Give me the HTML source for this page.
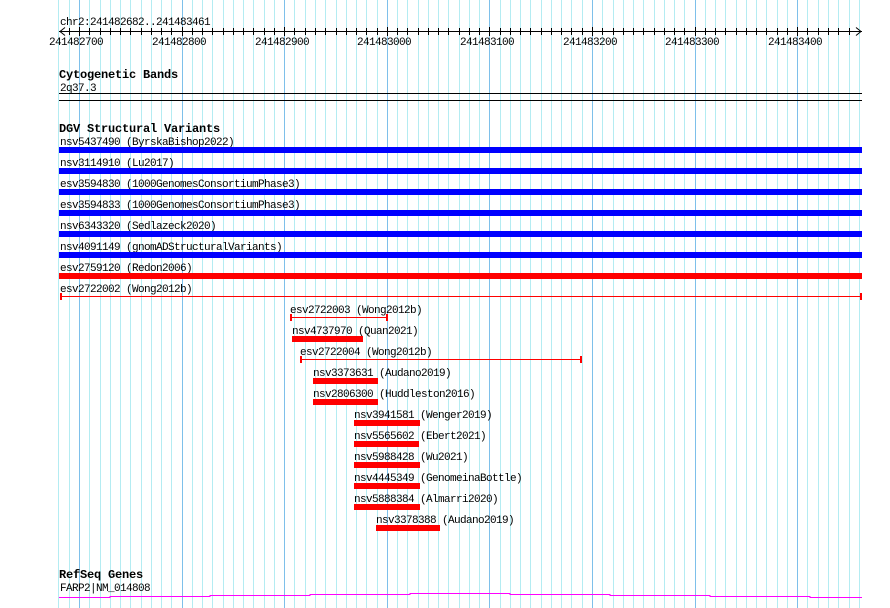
<!DOCTYPE html>
<html><head><meta charset="utf-8"><style>
html,body{margin:0;padding:0;background:#fff;}
svg{display:block}
text{font-family:"Liberation Mono","DejaVu Sans Mono",monospace;font-size:11px;letter-spacing:-0.6px;fill:#000}
.b{font-weight:bold;font-size:12px;letter-spacing:-0.2px}
</style></head><body>
<svg width="890" height="608" viewBox="0 0 890 608" xmlns="http://www.w3.org/2000/svg">
<g id="grid"></g>
<g id="ruler" stroke="#000" stroke-width="1" fill="none">
<line x1="59" y1="31.5" x2="862" y2="31.5"/>
<polyline points="65,27.5 60,31.5 65,35.5"/>
<polyline points="856,27.5 861,31.5 856,35.5"/>
</g>
<text x="60" y="25">chr2:241482682..241483461</text>
<text x="49" y="45">241482700</text>
<text x="152" y="45">241482800</text>
<text x="255" y="45">241482900</text>
<text x="357" y="45">241483000</text>
<text x="460" y="45">241483100</text>
<text x="563" y="45">241483200</text>
<text x="665" y="45">241483300</text>
<text x="768" y="45">241483400</text>

<text class="b" x="59" y="78">Cytogenetic Bands</text>
<text x="60" y="91">2q37.3</text>
<rect x="59" y="93" width="803" height="1" fill="#000"/>
<rect x="59" y="100" width="803" height="1" fill="#000"/>

<text class="b" x="59" y="132">DGV Structural Variants</text>
<text x="60" y="145">nsv5437490 (ByrskaBishop2022)</text>
<rect x="59" y="147" width="803" height="6" fill="#0000ff"/>
<text x="60" y="166">nsv3114910 (Lu2017)</text>
<rect x="59" y="168" width="803" height="6" fill="#0000ff"/>
<text x="60" y="187">esv3594830 (1000GenomesConsortiumPhase3)</text>
<rect x="59" y="189" width="803" height="6" fill="#0000ff"/>
<text x="60" y="208">esv3594833 (1000GenomesConsortiumPhase3)</text>
<rect x="59" y="210" width="803" height="6" fill="#0000ff"/>
<text x="60" y="229">nsv6343320 (Sedlazeck2020)</text>
<rect x="59" y="231" width="803" height="6" fill="#0000ff"/>
<text x="60" y="250">nsv4091149 (gnomADStructuralVariants)</text>
<rect x="59" y="252" width="803" height="6" fill="#0000ff"/>
<text x="60" y="271">esv2759120 (Redon2006)</text>
<rect x="59" y="273" width="803" height="6" fill="#ff0000"/>
<text x="60" y="292">esv2722002 (Wong2012b)</text>
<g fill="#ff0000">
<rect x="60" y="296" width="801" height="1"/><rect x="60" y="293" width="2" height="7"/><rect x="860" y="293" width="2" height="7"/>
</g>
<text x="290" y="313">esv2722003 (Wong2012b)</text>
<g fill="#ff0000">
<rect x="290" y="317" width="97" height="1"/><rect x="290" y="314" width="2" height="7"/><rect x="386" y="314" width="2" height="7"/>
</g>
<text x="292" y="334">nsv4737970 (Quan2021)</text>
<rect x="292" y="336" width="71" height="6" fill="#ff0000"/>
<text x="300" y="355">esv2722004 (Wong2012b)</text>
<g fill="#ff0000">
<rect x="301" y="359" width="280" height="1"/><rect x="300" y="356" width="2" height="7"/><rect x="580" y="356" width="2" height="7"/>
</g>
<text x="313" y="376">nsv3373631 (Audano2019)</text>
<rect x="313" y="378" width="65" height="6" fill="#ff0000"/>
<text x="313" y="397">nsv2806300 (Huddleston2016)</text>
<rect x="313" y="399" width="65" height="6" fill="#ff0000"/>
<text x="354" y="418">nsv3941581 (Wenger2019)</text>
<rect x="354" y="420" width="66" height="6" fill="#ff0000"/>
<text x="354" y="439">nsv5565602 (Ebert2021)</text>
<rect x="354" y="441" width="65" height="6" fill="#ff0000"/>
<text x="354" y="460">nsv5988428 (Wu2021)</text>
<rect x="354" y="462" width="66" height="6" fill="#ff0000"/>
<text x="354" y="481">nsv4445349 (GenomeinaBottle)</text>
<rect x="354" y="483" width="66" height="6" fill="#ff0000"/>
<text x="354" y="502">nsv5888384 (Almarri2020)</text>
<rect x="354" y="504" width="66" height="6" fill="#ff0000"/>
<text x="376" y="523">nsv3378388 (Audano2019)</text>
<rect x="376" y="525" width="64" height="6" fill="#ff0000"/>

<text class="b" x="59" y="578">RefSeq Genes</text>
<text x="60" y="591">FARP2|NM_014808</text>
<polyline fill="none" stroke="#ff00ff" stroke-width="1" points="59,597.5 110,597.5 110,596.5 210,596.5 210,595.5 310,595.5 310,594.5 410,594.5 410,593.5 510,593.5 510,594.5 610,594.5 610,595.5 710,595.5 710,596.5 810,596.5 810,597.5 862,597.5"/>
</svg>
<script>
(function(){
var ns="http://www.w3.org/2000/svg";
var g=document.getElementById("grid"),r=document.getElementById("ruler");
var step=10.26,base=79;
for(var k=-2;k<=76;k++){
 var x=Math.round(base+k*step)+0.5;
 if(x<58||x>862)continue;
 var major=((k%10)+10)%10===0;
 var l=document.createElementNS(ns,"line");
 l.setAttribute("x1",x);l.setAttribute("x2",x);l.setAttribute("y1",0);l.setAttribute("y2",608);
 l.setAttribute("stroke",major?"#7ec0ea":"#b4ecf2");l.setAttribute("stroke-width","1");
 g.appendChild(l);
 if(x>62&&x<858){
 var t=document.createElementNS(ns,"line");
 t.setAttribute("x1",x);t.setAttribute("x2",x);t.setAttribute("y1",major?27:28);t.setAttribute("y2",major?36:35);
 r.appendChild(t);}
}
})();
</script>
</body></html>
